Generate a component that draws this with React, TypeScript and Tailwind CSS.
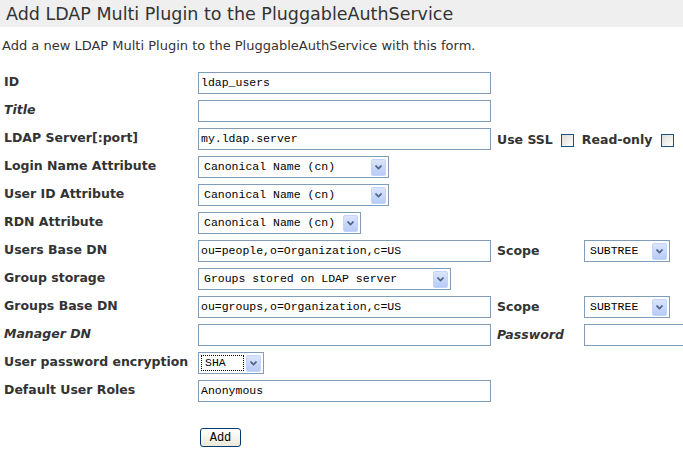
import React from "react";

const labelFont = { fontFamily: '"DejaVu Sans", Verdana, sans-serif' };
const monoFont = { fontFamily: '"Liberation Mono", "DejaVu Sans Mono", monospace' };

function TextBox({ value = "", width = "w-[293px]" }: { value?: string; width?: string }) {
  return (
    <div
      className={`${width} h-[22px] border border-[#7f9db9] bg-white flex items-center pl-[2px] text-[11.5px] text-black overflow-hidden whitespace-nowrap`}
      style={monoFont}
    >
      {value}
    </div>
  );
}

function SelectBox({ value, width, focused }: { value: string; width: string; focused?: boolean }) {
  return (
    <div
      className={`${width} h-[22px] border border-[#7f9db9] bg-white flex items-center justify-between pl-[2px] pr-[2px] text-[11.5px] text-black`}
      style={monoFont}
    >
      <span
        className={`flex-1 h-[16px] flex items-center pl-[3px] whitespace-nowrap ${
          focused ? "border border-dotted border-black bg-white" : ""
        }`}
      >
        {value}
      </span>
      <span className="w-[15px] h-[17px] ml-[2px] rounded-[2px] bg-gradient-to-b from-[#dbe5fc] to-[#b7cbf7] border border-[#c3d3fd] flex items-center justify-center">
        <svg width="7" height="5" viewBox="0 0 7 5">
          <path d="M0.5 0.5 L3.5 3.5 L6.5 0.5" stroke="#4d6185" strokeWidth="1.6" fill="none" />
        </svg>
      </span>
    </div>
  );
}

function CheckBox() {
  return (
    <span className="inline-block w-[13px] h-[13px] border border-[#1c5180] bg-gradient-to-br from-[#dcdcd7] to-white align-middle" />
  );
}

function Label({ children, italic }: { children: React.ReactNode; italic?: boolean }) {
  return (
    <span
      className={`text-[12.5px] leading-[16px] font-bold text-[#333333] whitespace-nowrap ${italic ? "italic" : ""}`}
      style={labelFont}
    >
      {children}
    </span>
  );
}

type Row = {
  label: string;
  italic?: boolean;
  field: React.ReactNode;
  extra?: React.ReactNode;
};

export default function App() {
  const rows: Row[] = [
    { label: "ID", field: <TextBox value="ldap_users" /> },
    { label: "Title", italic: true, field: <TextBox /> },
    {
      label: "LDAP Server[:port]",
      field: <TextBox value="my.ldap.server" />,
      extra: (
        <div className="flex items-center col-span-2">
          <span className="pb-[2px]">
            <Label>Use SSL</Label>
          </span>
          <span className="ml-[8px]">
            <CheckBox />
          </span>
          <span className="ml-[8px] pb-[2px]">
            <Label>Read-only</Label>
          </span>
          <span className="ml-[9px]">
            <CheckBox />
          </span>
        </div>
      ),
    },
    { label: "Login Name Attribute", field: <SelectBox value="Canonical Name (cn)" width="w-[191px]" /> },
    { label: "User ID Attribute", field: <SelectBox value="Canonical Name (cn)" width="w-[191px]" /> },
    { label: "RDN Attribute", field: <SelectBox value="Canonical Name (cn)" width="w-[163px]" /> },
    {
      label: "Users Base DN",
      field: <TextBox value="ou=people,o=Organization,c=US" />,
      extra: (
        <>
          <div className="pb-[4px]">
            <Label>Scope</Label>
          </div>
          <SelectBox value="SUBTREE" width="w-[86px]" />
        </>
      ),
    },
    { label: "Group storage", field: <SelectBox value="Groups stored on LDAP server" width="w-[253px]" /> },
    {
      label: "Groups Base DN",
      field: <TextBox value="ou=groups,o=Organization,c=US" />,
      extra: (
        <>
          <div className="pb-[4px]">
            <Label>Scope</Label>
          </div>
          <SelectBox value="SUBTREE" width="w-[86px]" />
        </>
      ),
    },
    {
      label: "Manager DN",
      italic: true,
      field: <TextBox />,
      extra: (
        <>
          <div className="pb-[4px]">
            <Label italic>Password</Label>
          </div>
          <TextBox width="w-[120px]" />
        </>
      ),
    },
    { label: "User password encryption", field: <SelectBox value="SHA" width="w-[66px]" focused /> },
    { label: "Default User Roles", field: <TextBox value="Anonymous" /> },
  ];

  return (
    <div className="w-[683px] h-[450px] bg-white overflow-hidden">
      <div className="h-[27px] bg-[#efefef] flex items-center pl-[6px]">
        <h1 className="text-[17.5px] leading-[22px] text-[#333333] whitespace-nowrap" style={labelFont}>
          Add LDAP Multi Plugin to the PluggableAuthService
        </h1>
      </div>
      <p className="mt-[11px] pl-[2px] text-[13px] leading-[16px] text-[#333333] whitespace-nowrap" style={labelFont}>
        Add a new LDAP Multi Plugin to the PluggableAuthService with this form.
      </p>

      <div className="mt-[14px]">
        {rows.map((row) => (
          <div key={row.label} className="grid grid-cols-[198px_299px_87px_1fr] h-[28px] items-center">
            <div className="pl-[4px] pb-[6px]">
              <Label italic={row.italic}>{row.label}</Label>
            </div>
            <div>{row.field}</div>
            {row.extra}
          </div>
        ))}
        <div className="h-[24px]" />
        <div className="pl-[200px]">
          <button
            className="w-[41px] h-[19px] border border-[#003c74] rounded-[3px] bg-gradient-to-b from-white to-[#ece9d8] text-[12px] text-black flex items-center justify-center"
            style={monoFont}
          >
            Add
          </button>
        </div>
      </div>
    </div>
  );
}
